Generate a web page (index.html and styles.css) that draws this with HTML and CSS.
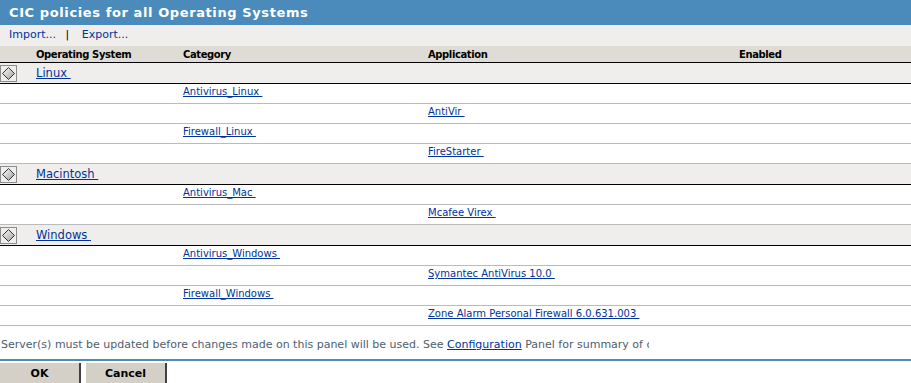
FILE: index.html
```html
<!DOCTYPE html>
<html lang="en">
<head>
    <meta charset="UTF-8">
    <title>CIC policies for all Operating Systems</title>
    <link rel="stylesheet" href="styles.css">
</head>
<body>
    <!-- title bar -->
    <div class="title-bar">CIC policies for all Operating Systems</div>

    <!-- toolbar -->
    <div class="toolbar">
        <a href="#">Import...</a>
        <span class="sep">|</span>
        <a href="#">Export...</a>
    </div>

    <table class="policy-table">
        <colgroup>
            <col class="c-icon">
            <col class="c-os">
            <col class="c-cat">
            <col class="c-app">
            <col class="c-en">
        </colgroup>
        <thead>
            <tr>
                <th></th>
                <th>Operating System</th>
                <th>Category</th>
                <th>Application</th>
                <th>Enabled</th>
            </tr>
        </thead>
        <tbody>
            <tr class="os-row">
                <td><span class="toggle"><svg width="15" height="15" viewBox="0 0 15 15"><defs><linearGradient id="g1" x1="0" y1="0" x2="1" y2="1"><stop offset="0" stop-color="#ffffff"/><stop offset="1" stop-color="#9a9a9a"/></linearGradient></defs><polygon points="7.5,1.5 13.5,7.5 7.5,13.5 1.5,7.5" fill="url(#g1)" stroke="#333" stroke-width="1"/></svg></span></td>
                <td><a href="#">Linux </a></td>
                <td></td><td></td><td></td>
            </tr>
            <tr class="sub-row"><td></td><td></td><td><a href="#">Antivirus_Linux </a></td><td></td><td></td></tr>
            <tr class="sub-row"><td></td><td></td><td></td><td><a href="#">AntiVir </a></td><td></td></tr>
            <tr class="sub-row"><td></td><td></td><td><a href="#">Firewall_Linux </a></td><td></td><td></td></tr>
            <tr class="sub-row"><td></td><td></td><td></td><td><a href="#">FireStarter </a></td><td></td></tr>

            <tr class="os-row">
                <td><span class="toggle"><svg width="15" height="15" viewBox="0 0 15 15"><polygon points="7.5,1.5 13.5,7.5 7.5,13.5 1.5,7.5" fill="url(#g1)" stroke="#333" stroke-width="1"/></svg></span></td>
                <td><a href="#">Macintosh </a></td>
                <td></td><td></td><td></td>
            </tr>
            <tr class="sub-row"><td></td><td></td><td><a href="#">Antivirus_Mac </a></td><td></td><td></td></tr>
            <tr class="sub-row"><td></td><td></td><td></td><td><a href="#">Mcafee Virex </a></td><td></td></tr>

            <tr class="os-row">
                <td><span class="toggle"><svg width="15" height="15" viewBox="0 0 15 15"><polygon points="7.5,1.5 13.5,7.5 7.5,13.5 1.5,7.5" fill="url(#g1)" stroke="#333" stroke-width="1"/></svg></span></td>
                <td><a href="#">Windows </a></td>
                <td></td><td></td><td></td>
            </tr>
            <tr class="sub-row"><td></td><td></td><td><a href="#">Antivirus_Windows </a></td><td></td><td></td></tr>
            <tr class="sub-row"><td></td><td></td><td></td><td><a href="#">Symantec AntiVirus 10.0 </a></td><td></td></tr>
            <tr class="sub-row"><td></td><td></td><td><a href="#">Firewall_Windows </a></td><td></td><td></td></tr>
            <tr class="sub-row"><td></td><td></td><td></td><td><a href="#">Zone Alarm Personal Firewall 6.0.631.003 </a></td><td></td></tr>
        </tbody>
    </table>

    <!-- note + buttons -->
    <div class="note-bar">
        <div class="note">Server(s) must be updated before changes made on this panel will be used. See <a href="#">Configuration</a> Panel for summary of changes.</div>
    </div>
    <div class="actions">
        <button class="btn">OK</button>
        <button class="btn">Cancel</button>
    </div>
</body>
</html>
```

FILE: styles.css
```css
/* general */
body {
    margin: 0;
    padding: 0;
    font-family: "DejaVu Sans", Verdana, sans-serif;
    font-size: 10px;
    background-color: #fff;
    width: 911px;
    overflow: hidden;
}
a {
    color: #003399;
    text-decoration: underline;
    white-space: pre;
}

/* title + toolbar */
.title-bar {
    height: 25px;
    line-height: 25px;
    background-color: #4a8bbb;
    color: #fff;
    font-weight: bold;
    font-size: 13px;
    letter-spacing: 0.6px;
    padding-left: 9px;
}
.toolbar {
    height: 21px;
    line-height: 20px;
    background-color: #efeeec;
    padding-left: 9px;
    font-size: 11px;
}
.toolbar a {
    text-decoration: none;
}
.toolbar .sep {
    color: #000;
    margin: 0 9px 0 6px;
}

/* table */
.policy-table {
    width: 911px;
    border-collapse: collapse;
    table-layout: fixed;
}
.c-icon { width: 36px; }
.c-os { width: 147px; }
.c-cat { width: 245px; }
.c-app { width: 311px; }
.c-en { width: 172px; }
.policy-table th,
.policy-table td {
    padding: 0;
    text-align: left;
    vertical-align: middle;
    white-space: nowrap;
}
.policy-table thead th {
    height: 16px;
    background-color: #dfdcd5;
    border-bottom: 1px solid #000;
    font-weight: bold;
    font-size: 10px;
    letter-spacing: -0.4px;
    color: #000;
}
.os-row td {
    height: 20px;
    background-color: #efeeec;
    border-bottom: 1px solid #000;
}
.os-row a {
    font-size: 11.5px;
}
.sub-row td {
    height: 15px;
    padding-bottom: 4px;
    background-color: #fff;
    border-bottom: 1px solid #bbb;
}
.toggle {
    display: block;
    width: 15px;
    height: 15px;
    border: 1px solid #8c8c8c;
}
.toggle svg {
    display: block;
}

/* footer */
.note-bar {
    height: 33px;
    border-bottom: 2px solid #4a8bbb;
}
.note {
    width: 648px;
    overflow: hidden;
    white-space: nowrap;
    color: #4e5e6e;
    font-size: 11px;
    padding: 12px 0 0 1px;
}
.actions {
    display: flex;
    gap: 5px;
    padding-top: 2px;
}
.btn {
    width: 81px;
    height: 22px;
    background-color: #d4d0c8;
    border: none;
    border-right: 2px solid #404040;
    border-bottom: 2px solid #404040;
    font-family: "DejaVu Sans", Verdana, sans-serif;
    font-weight: bold;
    font-size: 11px;
    color: #000;
    padding: 0;
}
```
